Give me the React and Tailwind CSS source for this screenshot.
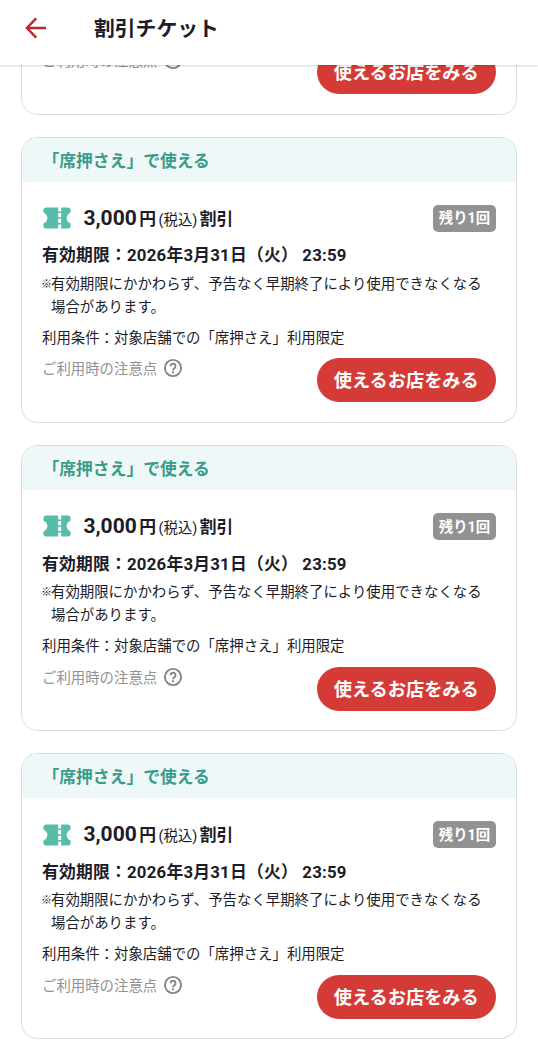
import React from "react";

const tickets = [1, 2, 3, 4];

const BackIcon = () => (
  <svg width="22" height="22" viewBox="0 0 22 22" fill="none" stroke="#c0242c" strokeWidth="2.4">
    <path d="M21 11H2.2M11.2 1.3L1.9 11l9.3 9.7" />
  </svg>
);

const TicketIcon = () => (
  <svg width="28" height="22" viewBox="0 0 28 22" fill="#58bcab">
    <path d="M3 0.5H15.2V21.5H3A2.6 2.6 0 0 1 0.4 19V16.6C2.6 15.6 4.4 13.6 4.4 11S2.6 6.4 0.4 5.4V3A2.6 2.6 0 0 1 3 0.5Z" />
    <path d="M18.2 0.5H25A2.6 2.6 0 0 1 27.6 3V5.4C25.4 6.4 23.6 8.4 23.6 11S25.4 15.6 27.6 16.6V19A2.6 2.6 0 0 1 25 21.5H18.2Z" />
    <path d="M15 4.6h4v1.4h-4zM15 10.3h4v1.4h-4zM15 16h4v1.4h-4z" />
  </svg>
);

const HelpIcon = () => (
  <svg width="20" height="20" viewBox="0 0 20 20" fill="none" stroke="#858585" strokeWidth="1.9">
    <circle cx="10" cy="10" r="8.1" />
    <path d="M7.5 8.2a2.5 2.5 0 1 1 4 2c-.9.7-1.5 1-1.5 2" />
    <path d="M10 13.3v1.9" />
  </svg>
);

const TicketCard = () => (
  <li className="h-[286.2px] shrink-0 overflow-hidden rounded-[16px] border border-[#d9dcdc] bg-white">
    <div className="flex h-[44px] items-center bg-[#eef8f9] pt-[3px] pl-[20.5px] text-[16.8px] font-bold text-[#3a9b88]">
      「席押さえ」で使える
    </div>
    <div className="px-5 pt-[23px]">
      <div className="flex h-[27px] items-center justify-between">
        <div className="flex items-center">
          <span className="ml-[1.4px]">
            <TicketIcon />
          </span>
          <p className="mt-[2px] ml-[12px] flex items-baseline font-bold whitespace-nowrap">
            <span className="text-[21px] leading-[27px]">3,000</span>
            <span className="ml-[2.5px] text-[16.8px] leading-[27px]">円</span>
            <span className="ml-[2.5px] text-[14.4px] leading-[27px] font-normal">(税込)</span>
            <span className="ml-[2.5px] text-[16.8px] leading-[27px]">割引</span>
          </p>
        </div>
        <span className="flex h-[27px] w-[63px] items-center justify-center rounded-[5px] bg-[#929292] pt-[2px] text-[14.4px] font-bold text-white">
          残り1回
        </span>
      </div>
      <p className="mt-[10.6px] text-[16.8px] leading-[26px] font-bold tracking-[0.22px] whitespace-pre">
        有効期限：2026年3月31日（火） 23:59
      </p>
      <div className="mt-[4.2px] flex text-[14.42px] leading-[23px]">
        <span className="-ml-[1px] w-[10px] shrink-0 text-[11px] font-bold">※</span>
        <p className="whitespace-nowrap">
          有効期限にかかわらず、予告なく早期終了により使用できなくなる
          <br />
          場合があります。
        </p>
      </div>
      <p className="mt-[8px] text-[14.42px] leading-[23px]">
        利用条件：対象店舗での「席押さえ」利用限定
      </p>
      <div className="mt-[8.9px] flex items-start justify-between">
        <button className="flex h-[23px] items-start gap-[6px] text-[14.42px] leading-[23px] text-[#929292]">
          ご利用時の注意点
          <HelpIcon />
        </button>
        <button className="h-[44px] w-[179.5px] rounded-full bg-[#d53b36] pt-[1px] text-[18.2px] font-bold text-white">
          使えるお店をみる
        </button>
      </div>
    </div>
  </li>
);

const App = () => {
  return (
    <div className="flex h-[1055px] w-full flex-col bg-white font-[Roboto,'Noto_Sans_CJK_JP',sans-serif] text-[#1b1c28]">
      <header className="relative z-10 flex h-[65px] shrink-0 items-center bg-white pb-[9px] pl-[25px] shadow-[0_1px_2px_rgba(0,0,0,0.18)]">
        <BackIcon />
        <h1 className="mt-[4px] ml-[47px] text-[20.8px] font-bold">割引チケット</h1>
      </header>
      <main className="min-h-0 flex-1 overflow-hidden">
        <ul className="-mt-[236.4px] flex flex-col gap-[22px] px-[21px]">
          {tickets.map((id) => (
            <TicketCard key={id} />
          ))}
        </ul>
      </main>
    </div>
  );
};

export default App;
